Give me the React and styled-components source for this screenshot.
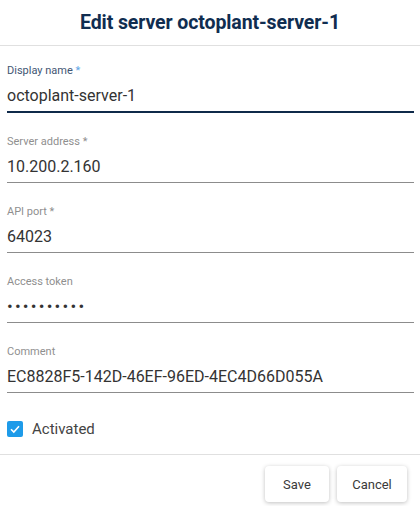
import React, { useEffect, useRef, useState } from 'react';
import styled, { createGlobalStyle } from 'styled-components';

const GlobalStyle = createGlobalStyle`
    html, body {
        margin: 0;
        padding: 0;
        background: #ffffff;
    }
    body {
        font-family: Roboto, "Noto Sans", Arial, sans-serif;
    }
    * {
        box-sizing: border-box;
    }
`;

const Dialog = styled.div`
    width: 420px;
    height: 506px;
    display: flex;
    flex-direction: column;
    background: #ffffff;
    overflow: hidden;
`;

const Header = styled.div`
    height: 46px;
    display: flex;
    align-items: center;
    justify-content: center;
    border-bottom: 1px solid #e0e0e0;
`;

const Title = styled.h2`
    margin: 0;
    font-size: 19.5px;
    font-weight: 700;
    color: #102d50;
    letter-spacing: -0.1px;
`;

const Body = styled.div`
    display: flex;
    flex-direction: column;
    padding: 0 6px 0 7px;
`;

const Field = styled.label`
    display: flex;
    flex-direction: column;
    padding-top: ${(p) => (p.$first ? '18px' : '22px')};
    border-bottom: ${(p) => (p.$focused ? '2px solid #0f2a4a' : '1px solid #8c8c8c')};
`;

const Label = styled.span`
    font-size: 11px;
    line-height: 14px;
    color: ${(p) => (p.$focused ? '#3f5674' : '#8f8f8f')};
`;

const Star = styled.span`
    color: ${(p) => (p.$focused ? '#5ea6e6' : '#8f8f8f')};
`;

const Input = styled.input`
    margin-top: 5px;
    margin-bottom: 4px;
    height: 24px;
    padding: 0;
    border: none;
    outline: none;
    background: transparent;
    font-family: inherit;
    font-size: ${(p) => (p.type === 'password' ? '17px' : '16px')};
    color: #333333;
    caret-color: #0f2a4a;
    letter-spacing: ${(p) => (p.type === 'password' ? '2.2px' : '0')};
`;

const CheckRow = styled.label`
    display: flex;
    align-items: center;
    gap: 9px;
    padding: 27px 0 16px 7px;
    border-bottom: 1px solid #e0e0e0;
    cursor: pointer;
`;

const Box = styled.span`
    width: 16px;
    height: 16px;
    border-radius: 2px;
    background: ${(p) => (p.$checked ? '#1e9be9' : '#ffffff')};
    border: ${(p) => (p.$checked ? 'none' : '1px solid #8c8c8c')};
    display: flex;
    align-items: center;
    justify-content: center;
`;

const HiddenCheck = styled.input`
    display: none;
`;

const CheckText = styled.span`
    font-size: 15px;
    color: #444444;
`;

const Footer = styled.div`
    display: flex;
    justify-content: flex-end;
    gap: 8px;
    padding: 11px 13px 0 0;
`;

const Button = styled.button`
    height: 36px;
    min-width: ${(p) => p.$width || 64}px;
    padding: 0 14px;
    border: none;
    border-radius: 4px;
    background: #ffffff;
    box-shadow: 0 1px 4px rgba(0, 0, 0, 0.25);
    font-family: inherit;
    font-size: 13px;
    color: #3a3a3a;
    cursor: pointer;
`;

const fields = [
    { name: 'name', label: 'Display name', required: true, value: 'octoplant-server-1' },
    { name: 'address', label: 'Server address', required: true, value: '10.200.2.160' },
    { name: 'port', label: 'API port', required: true, value: '64023' },
    { name: 'token', label: 'Access token', type: 'password', value: 'secrettok1' },
    { name: 'comment', label: 'Comment', value: 'EC8828F5-142D-46EF-96ED-4EC4D66D055A' },
];

const App = () => {
    const [values, setValues] = useState(
        Object.fromEntries(fields.map((f) => [f.name, f.value]))
    );
    const [focused, setFocused] = useState('name');
    const [active, setActive] = useState(true);
    const firstRef = useRef(null);

    useEffect(() => {
        const el = firstRef.current;
        if (el) {
            el.focus();
            el.setSelectionRange(el.value.length, el.value.length);
        }
    }, []);

    const handleChange = (e) => {
        const { name, value } = e.target;
        setValues((prev) => ({ ...prev, [name]: value }));
    };

    return (
        <>
            <GlobalStyle />
            <Dialog>
                <Header>
                    <Title>Edit server octoplant-server-1</Title>
                </Header>
                <Body>
                    {fields.map((f, i) => (
                        <Field key={f.name} $first={i === 0} $focused={focused === f.name}>
                            <Label $focused={focused === f.name}>
                                {f.label}
                                {f.required && <Star $focused={focused === f.name}> *</Star>}
                            </Label>
                            <Input
                                ref={i === 0 ? firstRef : undefined}
                                type={f.type || 'text'}
                                name={f.name}
                                value={values[f.name]}
                                onChange={handleChange}
                                onFocus={() => setFocused(f.name)}
                            />
                        </Field>
                    ))}
                </Body>
                <CheckRow>
                    <HiddenCheck
                        type="checkbox"
                        checked={active}
                        onChange={() => setActive(!active)}
                    />
                    <Box $checked={active}>
                        {active && (
                            <svg width="12" height="12" viewBox="0 0 12 12">
                                <path d="M2 6.2 L4.8 9 L10 3.2" fill="none" stroke="#ffffff" strokeWidth="1.6" />
                            </svg>
                        )}
                    </Box>
                    <CheckText>Activated</CheckText>
                </CheckRow>
                <Footer>
                    <Button type="submit" $width={64}>Save</Button>
                    <Button type="button" $width={70}>Cancel</Button>
                </Footer>
            </Dialog>
        </>
    );
};

export default App;
